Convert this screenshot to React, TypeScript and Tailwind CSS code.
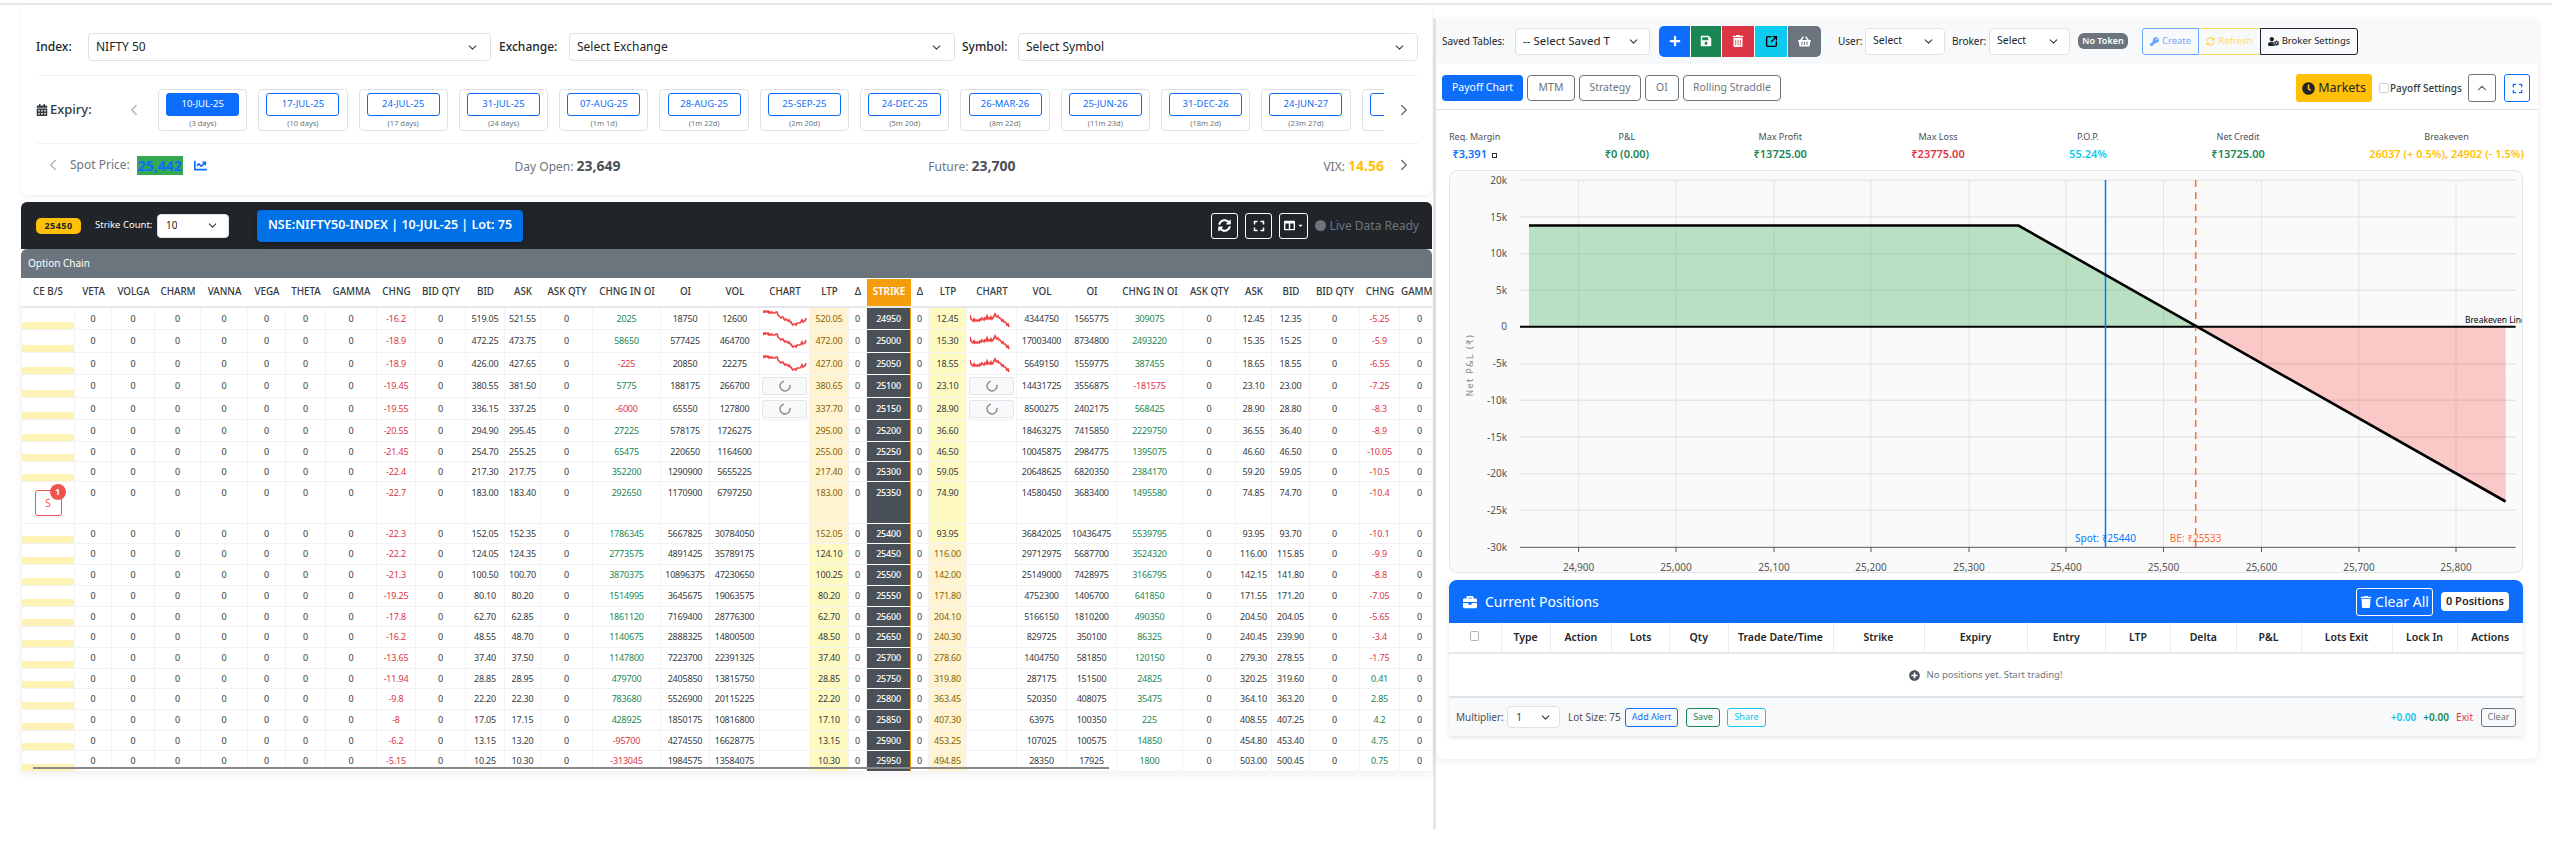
import React from "react";
import { ChevronDown, ChevronLeft, ChevronRight, ChevronUp, SquareArrowOutUpRight } from "lucide-react";
import {
  FaBriefcase, FaCalendarAlt, FaChartLine, FaClock, FaColumns, FaExpand, FaKey, FaPlus, FaPlusCircle,
  FaSave, FaShoppingBasket, FaSyncAlt, FaTrash, FaTrashAlt, FaUserCog, FaCaretDown,
} from "react-icons/fa";

const gridCols = "grid w-[1419px] grid-cols-[54px_37px_43px_46px_47px_38px_40px_51px_39px_50px_39px_36px_52px_68px_49px_50px_50px_39px_18px_44px_18px_38px_50px_50px_50px_66px_53px_36px_38px_50px_40px_40px]";
const heads = ["CE B/S", "VETA", "VOLGA", "CHARM", "VANNA", "VEGA", "THETA", "GAMMA", "CHNG", "BID QTY", "BID", "ASK", "ASK QTY", "CHNG IN OI", "OI", "VOL", "CHART", "LTP", "Δ", "STRIKE", "Δ", "LTP", "CHART", "VOL", "OI", "CHNG IN OI", "ASK QTY", "ASK", "BID", "BID QTY", "CHNG", "GAMMA"];

type R = [string, string, string, string, string, string, string, string, string, string, string, string, string, string, string, number];
const rows: R[] = [
  ["-16.2", "519.05", "521.55", "2025", "18750", "12600", "520.05", "24950", "12.45", "4344750", "1565775", "309075", "12.45", "12.35", "-5.25", 22],
  ["-18.9", "472.25", "473.75", "58650", "577425", "464700", "472.00", "25000", "15.30", "17003400", "8734800", "2493220", "15.35", "15.25", "-5.9", 23],
  ["-18.9", "426.00", "427.65", "-225", "20850", "22275", "427.00", "25050", "18.55", "5649150", "1559775", "387455", "18.65", "18.55", "-6.55", 22],
  ["-19.45", "380.55", "381.50", "5775", "188175", "266700", "380.65", "25100", "23.10", "14431725", "3556875", "-181575", "23.10", "23.00", "-7.25", 23],
  ["-19.55", "336.15", "337.25", "-6000", "65550", "127800", "337.70", "25150", "28.90", "8500275", "2402175", "568425", "28.90", "28.80", "-8.3", 22],
  ["-20.55", "294.90", "295.45", "27225", "578175", "1726275", "295.00", "25200", "36.60", "18463275", "7415850", "2229750", "36.55", "36.40", "-8.9", 22],
  ["-21.45", "254.70", "255.25", "65475", "220650", "1164600", "255.00", "25250", "46.50", "10045875", "2984775", "1395075", "46.60", "46.50", "-10.05", 20],
  ["-22.4", "217.30", "217.75", "352200", "1290900", "5655225", "217.40", "25300", "59.05", "20648625", "6820350", "2384170", "59.20", "59.05", "-10.5", 20],
  ["-22.7", "183.00", "183.40", "292650", "1170900", "6797250", "183.00", "25350", "74.90", "14580450", "3683400", "1495580", "74.85", "74.70", "-10.4", 42],
  ["-22.3", "152.05", "152.35", "1786345", "5667825", "30784050", "152.05", "25400", "93.95", "36842025", "10436475", "5539795", "93.95", "93.70", "-10.1", 20],
  ["-22.2", "124.05", "124.35", "2773575", "4891425", "35789175", "124.10", "25450", "116.00", "29712975", "5687700", "3524320", "116.00", "115.85", "-9.9", 21],
  ["-21.3", "100.50", "100.70", "3870375", "10896375", "47230650", "100.25", "25500", "142.00", "25149000", "7428975", "3166795", "142.15", "141.80", "-8.8", 21],
  ["-19.25", "80.10", "80.20", "1514995", "3645675", "19063575", "80.20", "25550", "171.80", "4752300", "1406700", "641850", "171.55", "171.20", "-7.05", 21],
  ["-17.8", "62.70", "62.85", "1861120", "7169400", "28776300", "62.70", "25600", "204.10", "5166150", "1810200", "490350", "204.50", "204.05", "-5.65", 20],
  ["-16.2", "48.55", "48.70", "1140675", "2888325", "14800500", "48.50", "25650", "240.30", "829725", "350100", "86325", "240.45", "239.90", "-3.4", 21],
  ["-13.65", "37.40", "37.50", "1147800", "7223700", "22391325", "37.40", "25700", "278.60", "1404750", "581850", "120150", "279.30", "278.55", "-1.75", 21],
  ["-11.94", "28.85", "28.95", "479700", "2405850", "13815750", "28.85", "25750", "319.80", "287175", "151500", "24825", "320.25", "319.60", "0.41", 20],
  ["-9.8", "22.20", "22.30", "783680", "5526900", "20115225", "22.20", "25800", "363.45", "520350", "408075", "35475", "364.10", "363.20", "2.85", 21],
  ["-8", "17.05", "17.15", "428925", "1850175", "10816800", "17.10", "25850", "407.30", "63975", "100350", "225", "408.55", "407.25", "4.2", 21],
  ["-6.2", "13.15", "13.20", "-95700", "4274550", "16628775", "13.15", "25900", "453.25", "107025", "100575", "14850", "454.80", "453.40", "4.75", 20],
  ["-5.15", "10.25", "10.30", "-313045", "1984575", "13584075", "10.30", "25950", "494.85", "28350", "17925", "1800", "503.00", "500.45", "0.75", 21],
];

const expiries = [
  ["10-JUL-25", "(3 days)"], ["17-JUL-25", "(10 days)"], ["24-JUL-25", "(17 days)"], ["31-JUL-25", "(24 days)"], ["07-AUG-25", "(1m 1d)"], ["28-AUG-25", "(1m 22d)"],
  ["25-SEP-25", "(2m 20d)"], ["24-DEC-25", "(5m 20d)"], ["26-MAR-26", "(8m 22d)"], ["25-JUN-26", "(11m 23d)"], ["31-DEC-26", "(18m 2d)"], ["24-JUN-27", "(23m 27d)"], ["", ""],
];

const sparkCall = "0,3 1,1 2,2 3,1 4,2 5,1 6,3 7,2 8,3 9,2 10,3 12,3 13,2 14,2 15,5 16,6 17,7 18,8 19,7 20,7 21,9 22,10 23,9 24,10 25,11 26,10 27,12 28,12 29,14 30,15 31,14 32,14 33,15 34,13 35,13 36,13 37,13 38,12 39,10 40,12 41,11 42,11 43,8";
const sparkPut = "0,5 1,9 2,10 3,11 4,9 5,11 6,10 7,11 8,10 9,11 10,9 11,10 12,8 13,9 14,10 15,8 16,9 17,6 18,9 19,8 20,9 21,7 22,9 23,8 24,6 25,4 26,6 27,7 28,6 29,8 30,8 31,9 32,11 33,10 34,12 35,12 36,13 37,15 38,14 39,17";

function Spark({ pts }: { pts: string }) {
  return (
    <svg width="44" height="18" viewBox="0 0 44 18" className="mx-auto mt-[2px] block">
      <polyline points={pts} fill="none" stroke="#ef4444" strokeWidth="1.7" />
    </svg>
  );
}
function Loader() {
  return (
    <div className="mx-auto mt-[2px] flex h-[18px] w-[45px] items-center justify-center rounded-[2px] border border-[#e2e5e9] bg-[#f8f9fa]">
      <svg width="12" height="12" viewBox="0 0 12 12">
        <path d="M7.5 1.2 A5 5 0 1 1 1.2 4.5" transform="rotate(60 6 6)" fill="none" stroke="#888" strokeWidth="1.4" />
      </svg>
    </div>
  );
}
function changeClass(v: string) {
  return v.startsWith("-") ? "text-[#dc3545]" : "text-[#198754]";
}
function Cell({ h, className = "", children }: { h: number; className?: string; children?: React.ReactNode }) {
  return (
    <div className={`overflow-hidden border-r border-b border-[#f1f3f5] text-center whitespace-nowrap ${className}`} style={{ lineHeight: `${Math.min(h, 22) - 1}px` }}>
      {children}
    </div>
  );
}
function Zero({ h }: { h: number }) {
  return <Cell h={h}>0</Cell>;
}

function OptionRow({ r, i }: { r: R; i: number }) {
  const h = r[15];
  const strike = Number(r[7]);
  const callItm = strike <= 25400;
  const putItm = strike >= 25450;
  return (
    <div className={gridCols} style={{ height: h }}>
      <div className="border-r border-b border-l border-[#f1f3f5]">
        {strike === 25350 ? (
          <div className="flex justify-center pt-[8px]">
            <div className="relative flex h-[26px] w-[27px] items-center justify-center rounded-[3px] border border-[#ef5350] text-[10px] text-[#ef5350]">
              S
              <span className="absolute -top-[7px] -right-[5px] flex h-[16px] w-[16px] items-center justify-center rounded-full bg-[#ef5350] text-[9px] font-bold text-white">1</span>
            </div>
          </div>
        ) : (
          <div className="flex h-full flex-col justify-end">
            <div className="h-[7px] bg-[#fef3b4]" />
          </div>
        )}
      </div>
      {[0, 1, 2, 3, 4, 5, 6].map((k) => <Zero key={k} h={h} />)}
      <Cell h={h} className={changeClass(r[0])}>{r[0]}</Cell>
      <Zero h={h} />
      <Cell h={h}>{r[1]}</Cell>
      <Cell h={h}>{r[2]}</Cell>
      <Zero h={h} />
      <Cell h={h} className={changeClass(r[3])}>{r[3]}</Cell>
      <Cell h={h}>{r[4]}</Cell>
      <Cell h={h}>{r[5]}</Cell>
      <Cell h={h}>{i < 3 ? <Spark pts={sparkCall} /> : i < 5 ? <Loader /> : null}</Cell>
      <Cell h={h} className={callItm ? "bg-[#fff3d1] text-[#856404]" : "bg-[#fff9c2] text-[#343a40]"}>{r[6]}</Cell>
      <Zero h={h} />
      <div className="border-r border-b border-r-[#f59e0b] border-b-white bg-[#495057] text-center font-medium text-white" style={{ lineHeight: `${Math.min(h, 22) - 1}px` }}>{r[7]}</div>
      <Zero h={h} />
      <Cell h={h} className={putItm ? "bg-[#fff3d1] text-[#856404]" : "bg-[#fff9c2] text-[#343a40]"}>{r[8]}</Cell>
      <Cell h={h}>{i < 3 ? <Spark pts={sparkPut} /> : i < 5 ? <Loader /> : null}</Cell>
      <Cell h={h}>{r[9]}</Cell>
      <Cell h={h}>{r[10]}</Cell>
      <Cell h={h} className={changeClass(r[11])}>{r[11]}</Cell>
      <Zero h={h} />
      <Cell h={h}>{r[12]}</Cell>
      <Cell h={h}>{r[13]}</Cell>
      <Zero h={h} />
      <Cell h={h} className={changeClass(r[14])}>{r[14]}</Cell>
      <Zero h={h} />
    </div>
  );
}

function Select({ label, className }: { label: string; className: string }) {
  return (
    <div className={`flex flex-none items-center justify-between rounded-[4px] border border-[#dee2e6] bg-white ${className}`}>
      <span className="overflow-hidden whitespace-nowrap">{label}</span>
      <ChevronDown size={13} strokeWidth={2} className="flex-none text-[#343a40]" />
    </div>
  );
}

function ExpiryCard({ date, sub, active }: { date: string; sub: string; active: boolean }) {
  return (
    <div className="h-[42px] w-[89.3px] flex-none rounded-[4px] border border-[#dee2e6] bg-white pt-[3px]">
      <div className={`mx-auto flex h-[23px] w-[73px] items-center justify-center rounded-[3px] border border-[#0d6efd] text-[9.5px] ${active ? "bg-[#0d6efd] text-white" : "bg-white text-[#0d6efd]"}`}>
        {date}
      </div>
      <div className="mt-[2px] text-center text-[7.5px] leading-[10px] text-[#6c757d]">{sub}</div>
    </div>
  );
}

const yTicks = [[181.3, "20k"], [218, "15k"], [254.7, "10k"], [291.3, "5k"], [327.7, "0"], [364.7, "-5k"], [401.3, "-10k"], [438, "-15k"], [474.7, "-20k"], [511.3, "-25k"]] as const;
const xTicks = [[1579.6, "24,900"], [1677, "25,000"], [1775, "25,100"], [1872, "25,200"], [1970, "25,300"], [2067, "25,400"], [2164.5, "25,500"], [2262.5, "25,600"], [2360, "25,700"], [2457, "25,800"]] as const;

function PayoffChart() {
  return (
    <svg width="1074" height="403" viewBox="1450 171 1074 403" className="block">
      {yTicks.map(([y, t]) => (
        <g key={t}>
          <line x1="1521" x2="2516.6" y1={y} y2={y} stroke="#e6e6e6" strokeWidth="1.5" />
          <text x="1508" y={y + 3.5} textAnchor="end" fontSize="10" fill="#555">{t}</text>
        </g>
      ))}
      <text x="1508" y="551.5" textAnchor="end" fontSize="10" fill="#555">-30k</text>
      {xTicks.map(([x, t]) => (
        <g key={t}>
          <line x1={x} x2={x} y1="181" y2="548" stroke="#e6e6e6" strokeWidth="1" />
          <line x1={x} x2={x} y1="548" y2="553" stroke="#555" strokeWidth="1" />
          <text x={x} y="571.5" textAnchor="middle" fontSize="10" fill="#555">{t}</text>
        </g>
      ))}
      <polygon points="1530,227 2019.5,227 2196.7,327.7 1530,327.7" fill="#28a745" fillOpacity="0.3" />
      <polygon points="2196.7,327.7 2506.6,327.7 2506.6,502.5" fill="#ff0000" fillOpacity="0.2" />
      <line x1="1521" x2="2516.6" y1="548.3" y2="548.3" stroke="#555" strokeWidth="1" />
      <line x1="1521" x2="2516.6" y1="327.7" y2="327.7" stroke="#000" strokeWidth="2" />
      <line x1="2106.5" x2="2106.5" y1="181" y2="548" stroke="#007bff" strokeWidth="1.5" />
      <line x1="2196.7" x2="2196.7" y1="181" y2="548" stroke="#ff6b35" strokeWidth="1.5" strokeDasharray="7 5" />
      <polyline points="1530,226.5 2019.5,226.5 2506.6,502.5" fill="none" stroke="#000" strokeWidth="2.6" />
      <text x="2106.5" y="543" textAnchor="middle" fontSize="10" fill="#007bff">Spot: ₹25440</text>
      <text x="2196.7" y="543" textAnchor="middle" fontSize="10" fill="#ff6b35">BE: ₹25533</text>
      <text x="2466" y="324" fontSize="8.5" fill="#000">Breakeven Line</text>
      <text x="1474" y="366" transform="rotate(-90 1474 366)" textAnchor="middle" fontSize="9" fill="#888" letterSpacing="1" style={{ fontFamily: "'DejaVu Sans', sans-serif" }}>Net P&amp;L (₹)</text>
    </svg>
  );
}

const stats: [string, React.ReactNode, string][] = [
  ["Req. Margin", <>₹3,391 <span className="ml-[2px] inline-block h-[5px] w-[5px] border border-[#333]" /></>, "text-[#0d6efd]"],
  ["P&L", "₹0 (0.00)", "text-[#198754]"],
  ["Max Profit", "₹13725.00", "text-[#198754]"],
  ["Max Loss", "₹23775.00", "text-[#dc3545]"],
  ["P.O.P.", "55.24%", "text-[#0dcaf0]"],
  ["Net Credit", "₹13725.00", "text-[#198754]"],
  ["Breakeven", "26037 (+ 0.5%), 24902 (- 1.5%)", "text-[#ffc107]"],
];

const posHeads: [string, string][] = [
  ["", "w-[52px]"], ["Type", "w-[49px]"], ["Action", "w-[61.5px]"], ["Lots", "w-[58px]"], ["Qty", "w-[58.5px]"], ["Trade Date/Time", "w-[105px]"], ["Strike", "w-[91px]"], ["Expiry", "w-[103px]"],
  ["Entry", "w-[78.5px]"], ["LTP", "w-[65px]"], ["Delta", "w-[65.5px]"], ["P&L", "w-[65px]"], ["Lots Exit", "w-[91px]"], ["Lock In", "w-[65px]"], ["Actions", "w-[66px]"],
];

export default function App() {
  return (
    <div className="h-[860px] w-[2552px] overflow-hidden bg-white font-['Noto_Sans',sans-serif] text-[12px] text-[#212529]">
      <div className="mt-[3px] h-[2px] bg-[#e5e7eb]" />
      <div className="flex items-start">
        {/* LEFT */}
        <div className="ml-[21px] w-[1411px] flex-none">
          <div className="h-[190px] rounded-b-[8px] bg-white pr-[13px] pl-[15px] shadow-[0_2px_6px_rgba(0,0,0,0.07)]">
            <div className="flex items-center pt-[28px]">
              <span className="w-[52px] flex-none font-medium">Index:</span>
              <Select label="NIFTY 50" className="h-[28px] w-[403px] pr-[11px] pl-[7px]" />
              <span className="ml-[8px] w-[70px] flex-none font-medium">Exchange:</span>
              <Select label="Select Exchange" className="h-[28px] w-[386px] pr-[11px] pl-[7px]" />
              <span className="ml-[7px] w-[56px] flex-none font-medium">Symbol:</span>
              <Select label="Select Symbol" className="h-[28px] w-[400px] pr-[11px] pl-[7px]" />
            </div>
            <div className="mt-[14px] border-t border-[#f1f3f5]" />
            <div className="flex h-[68px] items-center border-b border-[#f1f3f5]">
              <div className="flex w-[89px] flex-none items-center gap-[2px] text-[13px] font-medium text-[#343a40]">
                <FaCalendarAlt size={12} /> Expiry:
              </div>
              <ChevronLeft size={18} strokeWidth={2} className="mr-[15px] flex-none text-[#adb5bd]" />
              <div className="flex w-[1226px] flex-none gap-[11px] overflow-hidden">
                {expiries.map((e, i) => <ExpiryCard key={i} date={e[0]} sub={e[1]} active={i === 0} />)}
              </div>
              <ChevronRight size={18} strokeWidth={2} className="ml-[11px] flex-none text-[#6c757d]" />
            </div>
            <div className="mt-[11px] flex h-[20px] items-center">
              <ChevronLeft size={18} strokeWidth={2} className="w-[34px] flex-none text-[#adb5bd]" />
              <div className="flex w-[1314px] flex-none items-center justify-between text-[#6c757d]">
                <div className="flex items-center">
                  <span>Spot Price:</span>
                  <span className="ml-[7px] bg-[#34a853] px-[1px] text-[14px] leading-[19px] font-bold text-[#0d6efd]">25,442</span>
                  <FaChartLine size={13} className="ml-[11px] text-[#0d6efd]" />
                </div>
                <div>Day Open: <b className="text-[14px] text-[#495057]">23,649</b></div>
                <div>Future: <b className="text-[14px] text-[#495057]">23,700</b></div>
                <div>VIX: <b className="text-[14px] text-[#ffc107]">14.56</b></div>
              </div>
              <ChevronRight size={18} strokeWidth={2} className="ml-[11px] flex-none text-[#6c757d]" />
            </div>
          </div>

          <div className="mt-[7px] flex h-[47px] items-center rounded-t-[6px] bg-[#212529] pr-[13px] pl-[15px]">
            <span className="flex h-[16px] w-[45px] flex-none items-center justify-center rounded-[5px] bg-[#ffc107] text-[9px] font-bold tracking-[0.5px] text-[#212529]">25450</span>
            <span className="ml-[14px] w-[62px] flex-none text-[9.5px] whitespace-nowrap text-white">Strike Count:</span>
            <Select label="10" className="h-[24px] w-[72px] pr-[9px] pl-[8px] text-[10px]" />
            <div className="ml-[28px] flex h-[32px] w-[266px] flex-none items-center justify-center rounded-[4px] bg-[#0070e6] text-[12.5px] font-semibold whitespace-nowrap text-white shadow-[0_2px_4px_rgba(0,0,0,0.3)]">
              NSE:NIFTY50-INDEX | 10-JUL-25 | Lot: 75
            </div>
            <div className="ml-auto flex items-center">
              <div className="flex h-[26px] w-[27px] items-center justify-center rounded-[3px] border border-white text-white"><FaSyncAlt size={13} /></div>
              <div className="ml-[7px] flex h-[26px] w-[27px] items-center justify-center rounded-[3px] border border-white text-white"><FaExpand size={12} /></div>
              <div className="ml-[7px] flex h-[26px] w-[29px] items-center justify-center gap-[2px] rounded-[3px] border border-white text-white"><FaColumns size={11} /><FaCaretDown size={7} /></div>
              <span className="ml-[7px] h-[11px] w-[11px] rounded-full bg-[#6c757d]" />
              <span className="ml-[3px] text-[12px] whitespace-nowrap text-[#6c757d]">Live Data Ready</span>
            </div>
          </div>

          <div className="flex h-[29px] items-center rounded-t-[6px] bg-[#6c757d] pl-[7px] text-[10px] text-white">Option Chain</div>

          <div className="relative h-[494px] overflow-hidden bg-white text-[9px] tracking-[-0.2px] text-[#343a40] shadow-[0_3px_8px_rgba(0,0,0,0.06)]">
            <div className={`${gridCols} h-[30px] border-b-2 border-[#e5e7eb] text-[9.8px] font-medium tracking-normal`}>
              {heads.map((h, i) => (
                <div key={i} className={`flex items-center justify-center overflow-hidden whitespace-nowrap ${h === "STRIKE" ? "mt-px bg-[#f59e0b] font-semibold text-white" : ""}`}>{h}</div>
              ))}
            </div>
            {rows.map((r, i) => <OptionRow key={r[7]} r={r} i={i} />)}
            <div className="absolute bottom-[3px] left-[12px] h-[2px] w-[1076px] bg-[#888]" />
          </div>
        </div>

        {/* RIGHT */}
        <div className="mt-[13px] ml-[1px] h-[811px] w-[1119px] flex-none border-l-[3px] border-[#e5e7eb]">
          <div className="h-[741px] w-[1102px] rounded-b-[8px] bg-white shadow-[0_2px_6px_rgba(0,0,0,0.08)]">
            <div className="flex h-[46px] items-center rounded-[6px] bg-[#f8f9fa] pl-[6px] text-[10px]">
              <span className="w-[73px] flex-none">Saved Tables:</span>
              <Select label="-- Select Saved T" className="h-[27px] w-[135px] pr-[9px] pl-[7px] text-[11.5px]" />
              <div className="ml-[9px] flex h-[31px] flex-none overflow-hidden rounded-[5px] text-white">
                <div className="flex w-[31px] items-center justify-center bg-[#0d6efd]"><FaPlus size={12} /></div>
                <div className="flex w-[31px] items-center justify-center border-l border-white bg-[#198754]"><FaSave size={12} /></div>
                <div className="flex w-[33px] items-center justify-center border-l border-white bg-[#dc3545]"><FaTrashAlt size={12} /></div>
                <div className="flex w-[33px] items-center justify-center border-l border-white bg-[#0dcaf0] text-black"><SquareArrowOutUpRight size={13} strokeWidth={2.6} /></div>
                <div className="flex w-[34px] items-center justify-center border-l border-white bg-[#6c757d]"><FaShoppingBasket size={13} /></div>
              </div>
              <span className="ml-[17px] w-[27px] flex-none">User:</span>
              <Select label="Select" className="h-[27px] w-[80px] pr-[9px] pl-[7px] text-[10.5px]" />
              <span className="ml-[7px] w-[37px] flex-none">Broker:</span>
              <Select label="Select" className="h-[27px] w-[81px] pr-[9px] pl-[7px] text-[10.5px]" />
              <span className="ml-[8px] flex h-[16px] w-[50px] flex-none items-center justify-center rounded-[6px] bg-[#6c757d] text-[9px] font-semibold text-white">No Token</span>
              <div className="ml-[14px] flex h-[27px] flex-none text-[9.5px]">
                <div className="flex w-[57px] items-center justify-center gap-[3px] rounded-l-[3px] border border-[#6ea8fe] text-[#6ea8fe]"><FaKey size={9} />Create</div>
                <div className="flex w-[61px] items-center justify-center gap-[3px] border-y border-[#ffda6a] text-[#ffda6a]"><FaSyncAlt size={9} />Refresh</div>
                <div className="flex w-[98px] items-center justify-center gap-[3px] rounded-r-[3px] border border-[#212529] text-[#212529]"><FaUserCog size={11} />Broker Settings</div>
              </div>
            </div>

            <div className="flex h-[46px] items-center border-b border-[#dee2e6] pt-[3px] pl-[6px] text-[10.5px] text-[#6c757d]">
              <div className="flex h-[26px] w-[81px] flex-none items-center justify-center rounded-[4px] bg-[#0d6efd] text-white">Payoff Chart</div>
              <div className="ml-[4px] flex h-[26px] w-[48px] flex-none items-center justify-center rounded-[4px] border border-[#6c757d]">MTM</div>
              <div className="ml-[4px] flex h-[26px] w-[62px] flex-none items-center justify-center rounded-[4px] border border-[#6c757d]">Strategy</div>
              <div className="ml-[4px] flex h-[26px] w-[34px] flex-none items-center justify-center rounded-[4px] border border-[#6c757d]">OI</div>
              <div className="ml-[4px] flex h-[26px] w-[98px] flex-none items-center justify-center rounded-[4px] border border-[#6c757d]">Rolling Straddle</div>
              <div className="ml-auto flex items-center pr-[8px]">
                <div className="flex h-[28px] w-[76px] items-center justify-center gap-[3px] rounded-[3px] bg-[#ffc107] text-[12.5px] text-[#212529]"><FaClock size={13} />Markets</div>
                <span className="ml-[7px] h-[10px] w-[10px] rounded-[2px] border border-[#ced4da]" />
                <span className="ml-[1px] w-[78px] text-[10px] font-medium whitespace-nowrap text-[#343a40]">Payoff Settings</span>
                <div className="flex h-[28px] w-[28px] items-center justify-center rounded-[3px] border border-[#6c757d]"><ChevronUp size={14} /></div>
                <div className="ml-[8px] flex h-[28px] w-[26px] items-center justify-center rounded-[3px] border border-[#0d6efd] text-[#0d6efd]"><FaExpand size={11} /></div>
              </div>
            </div>

            <div className="flex h-[60px] items-start justify-between pt-[20px] pr-[14px] pl-[13px]">
              {stats.map(([l, v, c]) => (
                <div key={l} className="flex flex-col items-center whitespace-nowrap">
                  <span className="text-[9px] leading-[13px] text-[#495057]">{l}</span>
                  <span className={`mt-[3px] text-[11px] leading-[15px] font-semibold ${c}`}>{v}</span>
                </div>
              ))}
            </div>

            <div className="ml-[13px] h-[403px] w-[1074px] overflow-hidden rounded-[8px] border border-[#e5e5e5] bg-[#fafafa]">
              <div className="-mt-px -ml-px"><PayoffChart /></div>
            </div>

            <div className="mt-[7px] ml-[13px] w-[1074px] shadow-[0_2px_5px_rgba(0,0,0,0.1)]">
              <div className="flex h-[43px] items-center rounded-t-[8px] bg-[#0d6efd] pr-[14px] pl-[14px] text-white">
                <FaBriefcase size={14} />
                <span className="ml-[8px] text-[14px]">Current Positions</span>
                <div className="ml-auto flex h-[28px] w-[77px] items-center justify-center gap-[3px] rounded-[3px] border border-white text-[14px]"><FaTrash size={12} />Clear All</div>
                <div className="ml-[8px] flex h-[19px] w-[68px] items-center justify-center rounded-[4px] bg-white text-[11px] font-semibold text-[#212529]">0 Positions</div>
              </div>
              <table className="w-[1074px] table-fixed border-collapse bg-white">
                <colgroup>{posHeads.map(([, w], i) => <col key={i} className={w} />)}</colgroup>
                <thead>
                  <tr className="h-[30px] border-b-2 border-[#e5e7eb] text-[10.5px]">
                    {posHeads.map(([t], i) => (
                      <th key={i} className="border-l border-[#e9ecef] p-0 text-center font-semibold first:border-l-0">
                        {t || <span className="-mt-[4px] inline-block h-[10px] w-[9px] rounded-[2px] border border-[#adb5bd] align-middle" />}
                      </th>
                    ))}
                  </tr>
                </thead>
                <tbody>
                  <tr className="h-[44px] border-b-[2px] border-[#dee2e6]">
                    <td colSpan={15} className="p-0">
                      <div className="flex items-center justify-center gap-[6px] text-[9.5px] text-[#6c757d]">
                        <FaPlusCircle size={11} className="text-[#495057]" />No positions yet. Start trading!
                      </div>
                    </td>
                  </tr>
                </tbody>
              </table>
              <div className="flex h-[38px] items-center bg-[#f8f9fa] pr-[7px] pl-[7px] text-[10px] text-[#495057]">
                <span className="w-[51px] flex-none">Multiplier:</span>
                <Select label="1" className="h-[22px] w-[53px] pr-[7px] pl-[8px] text-[11px]" />
                <span className="ml-[8px] w-[57px] flex-none whitespace-nowrap">Lot Size: 75</span>
                <div className="flex h-[19px] w-[53px] flex-none items-center justify-center rounded-[3px] border border-[#0d6efd] text-[9px] text-[#0d6efd]">Add Alert</div>
                <div className="ml-[8px] flex h-[19px] w-[34px] flex-none items-center justify-center rounded-[3px] border border-[#198754] text-[9px] text-[#198754]">Save</div>
                <div className="ml-[7px] flex h-[19px] w-[39px] flex-none items-center justify-center rounded-[3px] border border-[#0dcaf0] text-[9px] text-[#0dcaf0]">Share</div>
                <div className="ml-auto flex items-center">
                  <span className="font-semibold text-[#0dcaf0]">+0.00</span>
                  <span className="ml-[7px] font-semibold text-[#198754]">+0.00</span>
                  <span className="ml-[7px] text-[#dc3545]">Exit</span>
                  <div className="ml-[8px] flex h-[19px] w-[35px] items-center justify-center rounded-[3px] border border-[#6c757d] text-[9px] text-[#6c757d]">Clear</div>
                </div>
              </div>
            </div>
          </div>
        </div>
      </div>
    </div>
  );
}
